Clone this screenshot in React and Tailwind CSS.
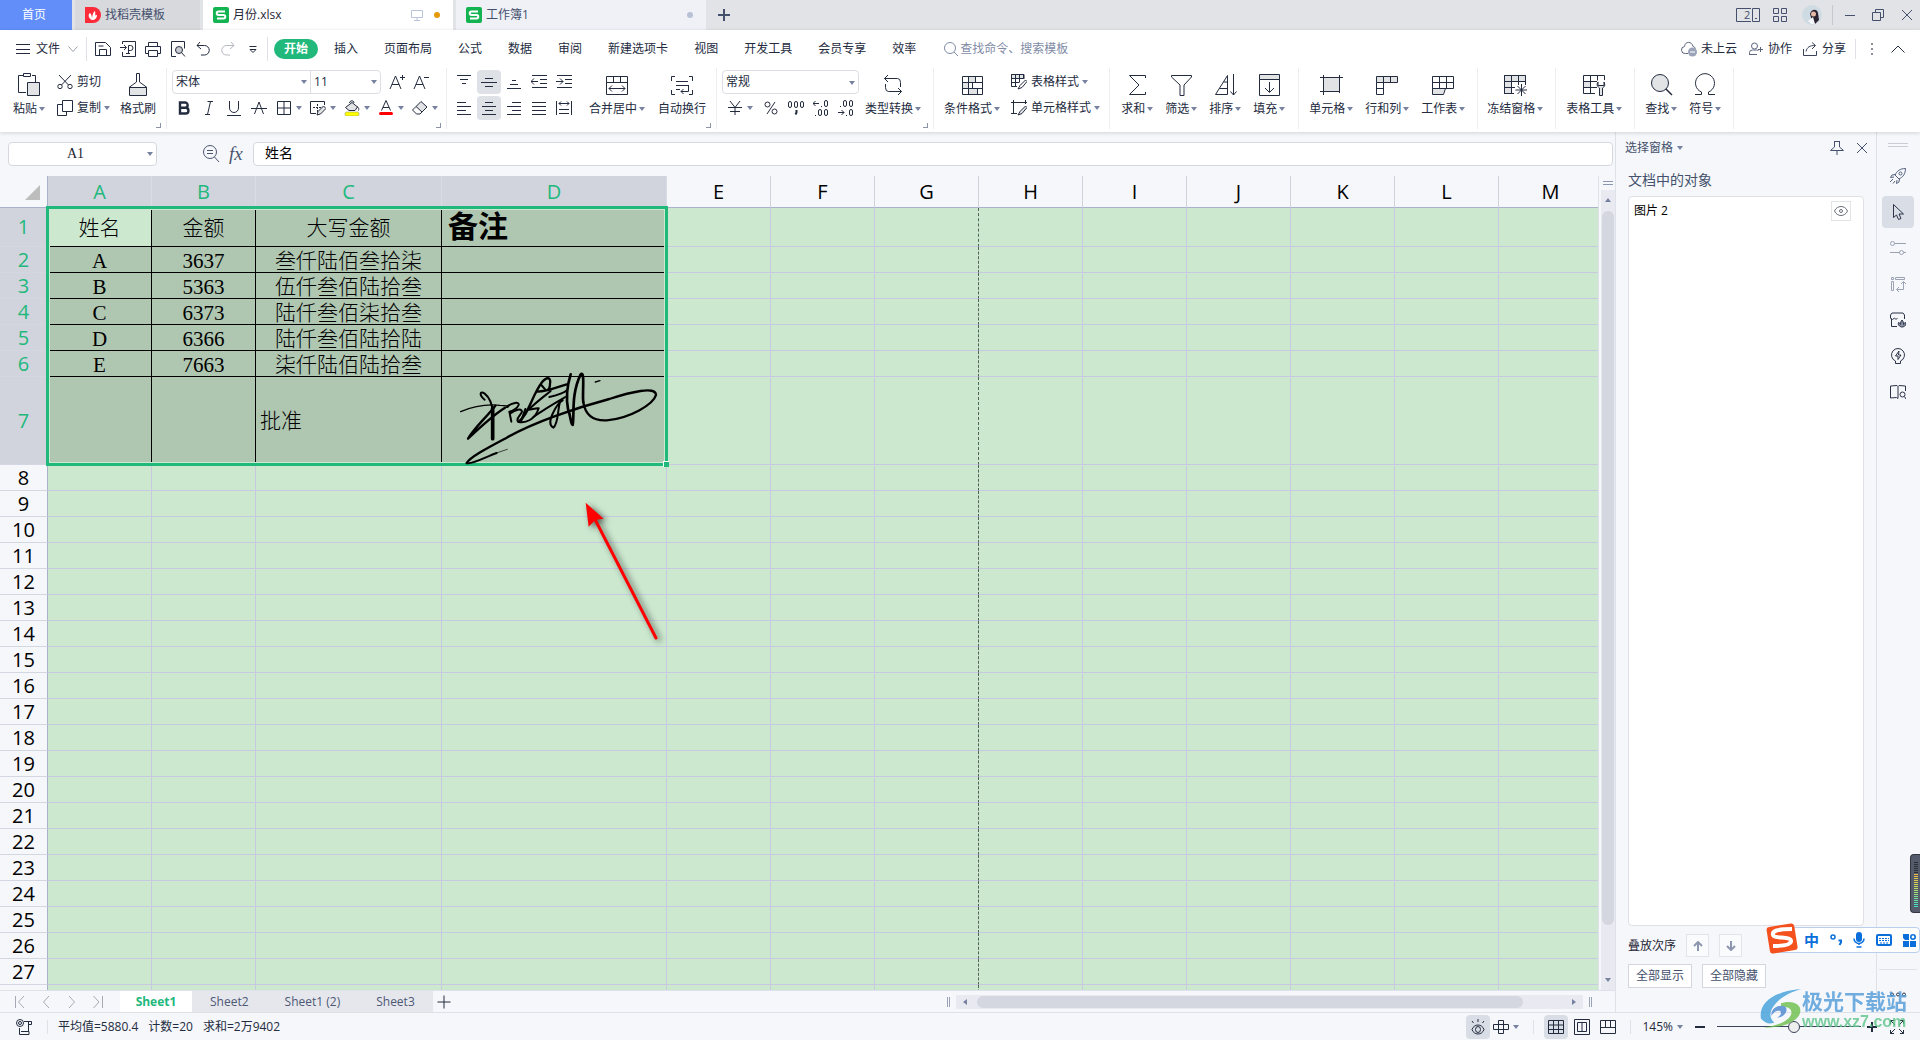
import React from 'react';

const Svg = ({ w = 16, h = 16, className = '', children }) => (
  <svg
    width={w}
    height={h}
    viewBox={`0 0 ${w} ${h}`}
    fill="none"
    stroke="currentColor"
    className={`shrink-0 ${className}`}
    aria-hidden="true"
  >
    {children}
  </svg>
);

const Caret = ({ className = '' }) => (
  <svg width="6" height="4" viewBox="0 0 6 4" className={`shrink-0 fill-[#76829f] ${className}`} aria-hidden="true">
    <path d="M0 0h6L3 4z" />
  </svg>
);

/* ---------- icons ---------- */

const GREY = '#e2e3e5';

const SheetLogo = () => (
  <Svg className="text-white">
    <rect width="16" height="16" rx="2" fill="#14b351" stroke="none" />
    <path d="M12 4.500H5.500a1.700 1.700 0 0 0 0 3.500h5a1.700 1.700 0 0 1 0 3.500H4" strokeWidth="2" />
  </Svg>
);

const DockerLogo = () => (
  <Svg>
    <path d="M0 0h8a8 8 0 0 1 0 16H0z" fill="#fb2b3a" stroke="none" />
    <path d="M7 13C3 11 3 7 5 6c2 2 2 4 2 7zM7 13c0-4 1-8 3-9 1 4 0 7-3 9zM7 13c1-3 3-5 5-5 0 3-2 5-5 5z" fill="#fff" stroke="none" />
  </Svg>
);

const icons = {
  save: (
    <Svg>
      <path d="M.500 1.500h10l5 5v8H.500zM4.500 14.500V8.500h7v6M3.500 5h5" />
    </Svg>
  ),
  pdf: (
    <Svg>
      <path d="M2.500 3V.500h13v15h-13V11M0 6.500h6M4 4l2.500 2.500L4 9M8.500 12V4.500h2a2 2 0 0 1 0 5h-2M6 12.500h4" />
    </Svg>
  ),
  print: (
    <Svg>
      <path d="M3.500 5V1.500h9V5M3 12.500H.500v-7h15v7H13M3.500 9.500h9v6h-9z" />
    </Svg>
  ),
  preview: (
    <Svg>
      <path d="M6 15.500H1.500V.500h13v7" />
      <circle cx="9" cy="9" r="3.500" fill="#c9ccd3" />
      <path d="m11.500 11.500 3.500 4" />
    </Svg>
  ),
  undo: (
    <Svg>
      <path d="M5 1 2 4.500 6 8M2 4.500h7.500a4.500 4.500 0 0 1 0 9.500H6" />
    </Svg>
  ),
  redo: (
    <Svg className="text-[#b4b8c0]">
      <path d="m11 1 3 3.500L10 8M14 4.500H6.500a4.500 4.500 0 0 0 0 9.500H10" />
    </Svg>
  ),
  more: (
    <Svg>
      <path d="M4.500 5.500h7M5 8.500l3 3 3-3z" />
    </Svg>
  ),
  paste: (
    <Svg w={24} h={24}>
      <path d="M9 19.500H1.500v-17H6M15 2.500h3.500V9M6.500.500h7v3h-7z" />
      <path d="M10.500 9.500h12v13h-12z" fill={GREY} />
    </Svg>
  ),
  cut: (
    <Svg>
      <path d="M2 1l9.500 10M14 1 4.500 11" />
      <circle cx="3" cy="12.500" r="2.200" />
      <circle cx="13" cy="12.500" r="2.200" />
    </Svg>
  ),
  copy: (
    <Svg>
      <path d="M5 4.500H.500v11h9V12M5.500.500h10v11h-10z" />
    </Svg>
  ),
  brush: (
    <Svg w={24} h={24}>
      <path d="M10.500.500h3V9l7.500 5.500H3L10.500 9z" />
      <path d="M3.500 14.500h17v8h-17z" fill={GREY} />
    </Svg>
  ),
  bold: (
    <Svg>
      <path d="M4 2.500h5a2.600 2.600 0 0 1 0 5.300H4zM4 7.800h5.600a2.800 2.800 0 0 1 0 5.700H4z" strokeWidth="2.400" />
    </Svg>
  ),
  italic: (
    <Svg>
      <path d="M6.500 1.500H12M4 14.500h5M9.500 1.500l-3 13" />
    </Svg>
  ),
  underline: (
    <Svg>
      <path d="M3.500 1v7a4.500 4.500 0 0 0 9 0V1M1 15.500h14" />
    </Svg>
  ),
  strike: (
    <Svg>
      <path d="M3.500 14 8 2l4.500 12M0 8.500h16" />
    </Svg>
  ),
  border: (
    <Svg>
      <path d="M1.500 1.500h13v13h-13zM8 1.500v13M1.500 8h13" />
    </Svg>
  ),
  drawBorder: (
    <Svg>
      <path d="M6 13.500H.500v-12h14V5" />
      <path d="M7.500 4v8M3 7.500h8" strokeDasharray="2 1" />
      <path d="m7 15 1-3.500L13.500 6 16 8.500 10.500 14z" fill={GREY} />
    </Svg>
  ),
  fill: (
    <Svg>
      <path d="M5.500 3C6 0 10 0 10 3M8 2.500 1.500 7.500 5 10.500h6L13.500 7z" fill={GREY} />
      <path d="M13 6.500c2 1 2 3 1.500 4" />
      <rect x="1" y="12" width="14" height="4" rx="1.500" fill="#ffff00" stroke="#8d8d6a" strokeWidth=".5" />
    </Svg>
  ),
  fontColor: (
    <Svg>
      <path d="M3.500 10.500 8 .500l4.500 10M5 7.500h6" />
      <rect x="1" y="12" width="14" height="3" rx="1.500" fill="#ff0000" stroke="none" />
    </Svg>
  ),
  eraser: (
    <Svg>
      <path d="m4 6.500 5-5 6 5.500-5 5z" fill={GREY} />
      <path d="M4 6.500.500 10 4.500 14h3.500l2-2" />
    </Svg>
  ),
  fontUp: (
    <Svg>
      <path d="m1 15 5.500-13L12 15M3 10.500h7M11 3.500h5M13.500 1v5" />
    </Svg>
  ),
  fontDown: (
    <Svg>
      <path d="m1 15 5.500-13L12 15M3 10.500h7M11 3.500h5" />
    </Svg>
  ),
  top: (
    <Svg>
      <path d="M1 1.500h14M4 5.500h8M6 9.500h4" />
    </Svg>
  ),
  middle: (
    <Svg>
      <path d="M4 4.500h8M0 8.500h16M4 12.500h8" />
    </Svg>
  ),
  bottom: (
    <Svg>
      <path d="M6 6.500h4M4 10.500h8M1 14.500h14" />
    </Svg>
  ),
  outdent: (
    <Svg>
      <path d="M1 1.500h15M9 5.500h7M9 9.500h7M1 13.500h15M0 7.500h7M3 4.500l-3 3 3 3" />
    </Svg>
  ),
  indent: (
    <Svg>
      <path d="M1 1.500h15M9 5.500h7M9 9.500h7M1 13.500h15M0 7.500h7M4 4.500l3 3-3 3" />
    </Svg>
  ),
  left: (
    <Svg>
      <path d="M1 2.500h9M1 6.500h14M1 10.500h9M1 14.500h14" />
    </Svg>
  ),
  center: (
    <Svg>
      <path d="M4 2.500h8M1 6.500h14M4 10.500h8M1 14.500h14" />
    </Svg>
  ),
  right: (
    <Svg>
      <path d="M6 2.500h9M1 6.500h14M6 10.500h9M1 14.500h14" />
    </Svg>
  ),
  justify: (
    <Svg>
      <path d="M1 2.500h14M1 6.500h14M1 10.500h14M1 14.500h14" />
    </Svg>
  ),
  distribute: (
    <Svg>
      <path d="M.500 1v14M15.500 1v14M3 3.500h10M5 1.500l-2 2 2 2M11 1.500l2 2-2 2M3 9.500h10M3 13.500h10" />
    </Svg>
  ),
  merge: (
    <Svg w={24} h={24}>
      <path d="M1.500 3.500h21v18h-21zM1.500 9.500h21M8.500 3.500v6M15.500 3.500v6M4 15.500h16M7 12.500l-3 3 3 3M17 12.500l3 3-3 3" />
    </Svg>
  ),
  wrap: (
    <Svg w={24} h={24}>
      <path d="M1.500 8V3.500H5M19 3.500h3.500V8M1.500 17v4.500H5M19 21.500h3.500V17M6 8.500h12M6 12.500h12M6 16.500h4M18.500 12v6.500H11M13.500 16 11 18.500l2.500 2.500" />
    </Svg>
  ),
  convert: (
    <Svg w={24} h={24}>
      <path d="M7 2 3.500 5.500 7 9M3.500 5.500h13q3 0 3 4V14M17 22l3.500-3.500L17 15M20.500 18.500h-13q-3 0-3-4V11" />
    </Svg>
  ),
  cond: (
    <Svg w={24} h={24}>
      <path d="M8.500 3.500h7v6h-7zM2.500 9.500h6v6h-6zM8.500 15.500h9v6h-9z" fill={GREY} />
      <path d="M2.500 3.500h20v18h-20zM2.500 9.500h20M2.500 15.500h20M15.500 3.500v6M12.500 9.500v6M8.500 15.500v6M17.500 15.500v6" />
    </Svg>
  ),
  tableStyle: (
    <Svg>
      <path d="M.500.500h12v4H.500z" fill={GREY} />
      <path d="M13 5V.500H.500v12H6M.500 4.500h12M.500 8.500H8M4.500.500v12M8.500.500v8" />
      <path d="m7 15 2-3.500 5.500-5.500 1.500 1.500-5 6z" fill="#fff" />
    </Svg>
  ),
  cellStyle: (
    <Svg>
      <path d="M0 2.500h16M2.500 0v13M0 13.500h6M14.500 0v4" />
      <path d="m7 15 2-3.500 5.500-5.500 1.500 1.500-5 6z" fill={GREY} />
    </Svg>
  ),
  sum: (
    <Svg w={24} h={24}>
      <path d="M20.500 5V2.500h-16l9.500 9.500-9.500 9.500h16V19" />
    </Svg>
  ),
  filter: (
    <Svg w={24} h={24}>
      <path d="M2.500 2.500h20V4l-7.500 8v10.500h-4V12L2.500 4z" />
    </Svg>
  ),
  sort: (
    <Svg w={24} h={24}>
      <path d="M14.500 2.500v19h-12zM10.500 9h4M6.500 15.500h8M20.500 1v21M17.500 18.500l3 3.500 3-3.500" />
    </Svg>
  ),
  fillDown: (
    <Svg w={24} h={24}>
      <path d="M2.500 1.500h20v5h-20z" fill={GREY} />
      <path d="M2.500 6.500h20v16h-20zM12.500 9v10M8 15l4.500 4.500L17 15" />
    </Svg>
  ),
  cell: (
    <Svg w={24} h={24}>
      <path d="M4.500 4.500h16v14h-16z" fill={GREY} />
      <path d="M1 4.500h23M4.500 2v20M20.500 2v14M1 18.500h17M20.500 18v2" />
    </Svg>
  ),
  rowCol: (
    <Svg w={24} h={24}>
      <path d="M1.500 3.500h21v6h-21z" fill={GREY} />
      <path d="M1.500 9.500v12h7v-12M1.500 15.500h7M8.500 3.500v6M15.500 3.500v6" />
    </Svg>
  ),
  worksheet: (
    <Svg w={24} h={24}>
      <path d="M1.500 15.500h13l-2 6h-11z" fill={GREY} />
      <path d="M1.500 3.500h21v12h-21zM1.500 9.500h21M8.500 3.500v12M15.500 3.500v12" />
    </Svg>
  ),
  freeze: (
    <Svg w={24} h={24}>
      <path d="M1.500 2.500h21v6h-21zM1.500 8.500h7v12h-7z" fill={GREY} />
      <path d="M22.500 12V2.500h-21v18H11M1.500 14.500H12M8.500 2.500v18M15.500 2.500V12M18.500 11v12M12.500 17h12M14.500 13l8 8M22.500 13l-8 8" />
    </Svg>
  ),
  tableTools: (
    <Svg w={24} h={24}>
      <path d="M1.500 8.500h7v6h-7z" fill={GREY} />
      <path d="M22.500 7V2.500h-21v18H13M1.500 8.500H15M1.500 14.500H15M8.500 2.500v18M15.500 2.500v5" />
      <path d="M16 9c-2 3 0 5 1.500 6v7.500h3V15c2-1 3-3 1.500-6v3.500h-6z" fill={GREY} />
    </Svg>
  ),
  find: (
    <Svg w={24} h={24}>
      <circle cx="11" cy="10" r="8.500" fill={GREY} />
      <path d="m17 16 6 6" strokeWidth="1.500" />
    </Svg>
  ),
  symbol: (
    <Svg w={24} h={24}>
      <path d="M2 21.500h6.500V19A9.500 9.500 0 1 1 15.500 19v2.500H22" />
    </Svg>
  ),
};

/* ---------- title bar ---------- */

const TitleBar = () => (
  <header className="flex h-[30px] shrink-0 items-stretch bg-[#e2e3e7] text-[#44506c]">
    <button className="w-[72px] bg-[#628efa] pr-1 text-white">首页</button>
    <button className="ml-[3px] flex w-[125px] items-center gap-1 bg-[#d8d9dd] pl-[10px]">
      <DockerLogo />
      找稻壳模板
    </button>
    <div className="ml-[3px] flex w-[250px] items-center gap-1 bg-white pl-[10px] text-[#1f2536]">
      <SheetLogo />
      <span className="grow">月份.xlsx</span>
      <Svg w={12} h={12} className="text-[#b9c3da]">
        <path d="M.500 1.500h11v7H.500zM3 11.500h6M6 8.500v3" />
      </Svg>
      <span className="mr-[13px] ml-[7px] size-[6px] rounded-full bg-[#e59a0c]" />
    </div>
    <div className="ml-[3px] flex w-[250px] items-center gap-1 bg-[#eff1f7] pl-[10px]">
      <SheetLogo />
      <span className="grow">工作簿1</span>
      <span className="mr-[13px] size-[6px] rounded-full bg-[#b9c1d6]" />
    </div>
    <button className="flex w-9 items-center justify-center" aria-label="新建">
      <Svg w={12} h={12}>
        <path d="M0 6h12M6 0v12" strokeWidth="2" />
      </Svg>
    </button>
    <div className="grow" />
    <div className="flex items-center">
      <button aria-label="切换窗口" className="relative mr-[13px]">
        <Svg w={24} h={14}>
          <path d="M15 .500H.500v13H15M16.500.500h7v13h-7zM19 10.500h2" />
        </Svg>
        <span className="absolute top-[1px] left-[8px] text-[11px] leading-[12px]">2</span>
      </button>
      <button aria-label="应用" className="mr-[15px]">
        <Svg w={14} h={14}>
          <path d="M.500.500h5v5h-5zM8.500.500h5v5h-5zM.500 8.500h5v5h-5zM8.500 8.500h5v5h-5z" />
        </Svg>
      </button>
      <Svg w={20} h={20}>
        <circle cx="10" cy="10" r="10" fill="#cfdbe2" stroke="none" />
        <path d="M8 9c1-5 7-6 8-1l1 7-4 4-3-3z" fill="#2c2330" stroke="none" />
        <circle cx="11.500" cy="9" r="2.500" fill="#e6b9a4" stroke="none" />
        <path d="m6 16 5-4 2 7H9z" fill="#f3f6f8" stroke="none" />
      </Svg>
      <span className="mr-[12px] ml-[10px] h-5 w-px bg-[#c6c8cf]" />
      <button aria-label="最小化" className="mr-[17px]">
        <Svg w={10} h={12}>
          <path d="M0 6.500h10" />
        </Svg>
      </button>
      <button aria-label="还原" className="mr-[18px]">
        <Svg w={12} h={12}>
          <path d="M.500 3.500h8v8h-8zM3.500 3V.500h8v8H9" />
        </Svg>
      </button>
      <button aria-label="关闭" className="mr-[8px]">
        <Svg w={10} h={12}>
          <path d="m0 1 10 10M10 1 0 11" />
        </Svg>
      </button>
    </div>
  </header>
);

/* ---------- menu row ---------- */

const menus = ['插入', '页面布局', '公式', '数据', '审阅', '新建选项卡', '视图', '开发工具', '会员专享', '效率'];
const quick = [
  ['save', '保存'],
  ['pdf', '输出为PDF'],
  ['print', '打印'],
  ['preview', '打印预览'],
  ['undo', '撤销'],
  ['redo', '恢复'],
  ['more', '自定义'],
];

const MenuRow = () => (
  <nav className="flex h-[38px] items-center pl-4">
    <button className="flex items-center">
      <Svg w={14} h={12} className="mr-[6px]">
        <path d="M0 1.500h14M0 6.500h14M0 10.500h14" />
      </Svg>
      文件
      <Svg w={10} h={6} className="ml-2 text-[#9aa0ac]">
        <path d="m.500.500 4.500 5 4.500-5" />
      </Svg>
    </button>
    <span className="ml-2 h-6 w-px bg-[#dfe1e6]" />
    <div className="ml-2 flex gap-[9px]">
      {quick.map(([id, label]) => (
        <button key={id} aria-label={label}>
          {icons[id]}
        </button>
      ))}
    </div>
    <span className="ml-[6px] h-6 w-px bg-[#dfe1e6]" />
    <button className="ml-[6px] h-5 rounded-full bg-[#21b87c] px-[10px] font-bold text-white">开始</button>
    <div className="ml-4 flex gap-[26px]">
      {menus.map((m) => (
        <button key={m}>{m}</button>
      ))}
    </div>
    <label className="ml-7 flex items-center gap-[2px] text-[#7f8ba6]">
      <Svg w={14} h={14}>
        <circle cx="6" cy="6" r="5.500" />
        <path d="m10 10 4 4" />
      </Svg>
      <input
        className="w-40 bg-transparent outline-none placeholder:text-[#7f8ba6]"
        placeholder="查找命令、搜索模板"
        aria-label="查找命令"
      />
    </label>
    <div className="grow" />
    <div className="flex items-center">
      <button className="flex items-center gap-1">
        <Svg className="text-[#5b657c]">
          <path d="M7 12.500H4.500a3.500 3.500 0 0 1-1-7C4 0 11 0 12 5.500c1 0 2 1 2.500 2" />
          <circle cx="11.500" cy="11" r="4.500" fill="#9ba3b8" stroke="none" />
          <path d="M9 11h5" stroke="#fff" />
        </Svg>
        未上云
      </button>
      <button className="ml-3 flex items-center gap-[5px]">
        <Svg w={14} className="text-[#5b657c]">
          <circle cx="5.500" cy="5" r="3" />
          <path d="M.500 14v-2.500q0-2.500 3-2.500h4q1.500 0 2 1M.500 13.500H8M9 8.500h5M11.500 6v5" />
        </Svg>
        协作
      </button>
      <button className="ml-[11px] flex items-center gap-[5px]">
        <Svg w={14} className="text-[#3a435a]">
          <path d="M.500 8v6.500h13V10M3 10.500C4 6 7 4.500 12 4.500M9 1.500l3.500 3L9 8" />
        </Svg>
        分享
      </button>
      <span className="ml-[9px] h-5 w-px bg-[#dfe1e6]" />
      <button aria-label="更多" className="ml-[14px]">
        <Svg w={4} h={14} className="text-[#8b8f98]">
          <path d="M2 1v2M2 6v2M2 11v2" strokeWidth="2" />
        </Svg>
      </button>
      <button aria-label="折叠功能区" className="mr-[15px] ml-[17px]">
        <Svg w={14} h={8}>
          <path d="M.500 7.500 7 1l6.500 6.500" />
        </Svg>
      </button>
    </div>
  </nav>
);

/* ---------- ribbon ---------- */

const Big = ({ icon, label, caret = true }) => (
  <button className="flex flex-col items-center pt-[5px]">
    {icons[icon]}
    <span className="mt-1 flex items-center gap-[2px] leading-4">
      {label}
      {caret && <Caret />}
    </span>
  </button>
);

const Tool = ({ icon, label, caret, active }) => (
  <button
    aria-label={label}
    className={`flex h-6 items-center justify-center gap-1 ${caret ? 'w-[26px]' : 'w-6'} ${
      active ? 'rounded-sm bg-[#dee2e7]' : ''
    }`}
  >
    {icons[icon]}
    {caret && <Caret />}
  </button>
);

const Row = ({ icon, label, caret = true }) => (
  <button className="flex h-6 items-center">
    {icons[icon]}
    <span className="mr-[3px] ml-1">{label}</span>
    {caret && <Caret />}
  </button>
);

const Group = ({ children, corner, className = 'gap-3 px-[10px]' }) => (
  <div className={`relative flex h-[61px] shrink-0 items-start border-r border-[#eceef1] ${className}`}>
    {children}
    {corner && <span className="absolute right-[5px] bottom-[1px] size-[5px] border-r border-b border-[#8c93a5]" />}
  </div>
);

const Select = ({ label, value, className }) => (
  <div className={`relative h-6 ${className}`}>
    <select aria-label={label} className="h-full w-full appearance-none bg-transparent px-[3px] outline-none">
      <option>{value}</option>
    </select>
    <Caret className="pointer-events-none absolute top-[10px] right-[3px]" />
  </div>
);

const Ribbon = () => (
  <div className="flex h-16 pl-[3px]">
    <Group corner className="pr-[10px] pl-[10px]">
      <Big icon="paste" label="粘贴" />
      <div className="mr-[10px] ml-3 flex flex-col gap-[2px] pt-[2px]">
        <Row icon="cut" label="剪切" caret={false} />
        <Row icon="copy" label="复制" />
      </div>
      <Big icon="brush" label="格式刷" caret={false} />
    </Group>

    <Group corner className="pr-2 pl-[5px]">
      <div className="flex flex-col gap-[2px] pt-[2px]">
        <div className="flex items-center">
          <div className="flex rounded-sm border border-[#dcdee3]">
            <Select label="字体" value="宋体" className="-my-px w-[137px]" />
            <Select label="字号" value="11" className="-my-px w-[70px] border-l border-[#dcdee3]" />
          </div>
          <div className="ml-1 flex">
            <Tool icon="fontUp" label="增大字号" />
            <Tool icon="fontDown" label="减小字号" />
          </div>
        </div>
        <div className="flex items-center">
          <div className="flex gap-[1px]">
            <Tool icon="bold" label="加粗" />
            <Tool icon="italic" label="倾斜" />
            <Tool icon="underline" label="下划线" />
            <Tool icon="strike" label="删除线" />
          </div>
          <div className="ml-[5px] flex gap-2">
            <Tool icon="border" label="边框" caret />
            <Tool icon="drawBorder" label="绘制边框" caret />
            <Tool icon="fill" label="填充颜色" caret />
            <Tool icon="fontColor" label="字体颜色" caret />
            <Tool icon="eraser" label="清除" caret />
          </div>
        </div>
      </div>
    </Group>

    <Group corner className="gap-[13px] pr-[10px] pl-[5px]">
      <div className="grid grid-cols-5 gap-x-px gap-y-[2px] pt-[2px]">
        <Tool icon="top" label="顶端对齐" />
        <Tool icon="middle" label="垂直居中" active />
        <Tool icon="bottom" label="底端对齐" />
        <Tool icon="outdent" label="减少缩进" />
        <Tool icon="indent" label="增加缩进" />
        <Tool icon="left" label="左对齐" />
        <Tool icon="center" label="水平居中" active />
        <Tool icon="right" label="右对齐" />
        <Tool icon="justify" label="两端对齐" />
        <Tool icon="distribute" label="分散对齐" />
      </div>
      <Big icon="merge" label="合并居中" />
      <Big icon="wrap" label="自动换行" caret={false} />
    </Group>

    <Group corner className="gap-[6px] pr-3 pl-[5px]">
      <div className="flex flex-col gap-[2px] pt-[2px]">
        <Select label="数字格式" value="常规" className="w-[137px] rounded-sm border border-[#dcdee3]" />
        <div className="flex gap-px">
          <button aria-label="货币" className="flex h-6 w-9 items-center gap-1 pl-[5px]">
            <Svg>
              <path d="m3 1 5 6.500L13 1M1 7.500h14M3 11.500h10M8 7.500V15" />
            </Svg>
            <Caret />
          </button>
          <button aria-label="百分比" className="flex h-6 w-6 items-center justify-center">
            <Svg>
              <circle cx="4.500" cy="4.500" r="2.500" />
              <circle cx="11.500" cy="11.500" r="2.500" />
              <path d="M12 2 4 14" />
            </Svg>
          </button>
          <button aria-label="千位分隔" className="flex h-6 w-6 items-center justify-center">
            <Svg>
              <rect x=".5" y="1.500" width="3" height="6" rx="1.500" />
              <rect x="6.500" y="1.500" width="3" height="6" rx="1.500" />
              <rect x="12.500" y="1.500" width="3" height="6" rx="1.500" />
              <path d="M8.500 10v2.500l-1 2" strokeWidth="2" />
            </Svg>
          </button>
          <button aria-label="增加小数位" className="flex h-6 w-6 items-center justify-center">
            <Svg>
              <path d="M0 3.500h6M2.500 1 0 3.500 2.500 6M8.500 6v1M2.500 15v1" />
              <rect x="11.500" y=".5" width="3" height="6" rx="1.500" />
              <rect x="5.500" y="9.500" width="3" height="6" rx="1.500" />
              <rect x="11.500" y="9.500" width="3" height="6" rx="1.500" />
            </Svg>
          </button>
          <button aria-label="减少小数位" className="flex h-6 w-6 items-center justify-center">
            <Svg>
              <path d="M0 12.500h6M3.500 10 6 12.500 3.500 15M8.500 15v1M2.500 6v1" />
              <rect x="5.500" y=".5" width="3" height="6" rx="1.500" />
              <rect x="11.500" y=".5" width="3" height="6" rx="1.500" />
              <rect x="11.500" y="9.500" width="3" height="6" rx="1.500" />
            </Svg>
          </button>
        </div>
      </div>
      <Big icon="convert" label="类型转换" />
    </Group>

    <Group className="gap-[11px] pr-[9px] pl-[10px]">
      <Big icon="cond" label="条件格式" />
      <div className="flex flex-col gap-[2px] pt-[2px]">
        <Row icon="tableStyle" label="表格样式" />
        <Row icon="cellStyle" label="单元格样式" />
      </div>
    </Group>

    <Group className="gap-3 pr-[13px] pl-[11px]">
      <Big icon="sum" label="求和" />
      <Big icon="filter" label="筛选" />
      <Big icon="sort" label="排序" />
      <Big icon="fillDown" label="填充" />
    </Group>
    <Group className="gap-3 pr-3 pl-[10px]">
      <Big icon="cell" label="单元格" />
      <Big icon="rowCol" label="行和列" />
      <Big icon="worksheet" label="工作表" />
    </Group>
    <Group className="pr-3 pl-[9px]">
      <Big icon="freeze" label="冻结窗格" />
    </Group>
    <Group className="pr-3 pl-[10px]">
      <Big icon="tableTools" label="表格工具" />
    </Group>
    <Group className="gap-3 pr-3 pl-[10px]">
      <Big icon="find" label="查找" />
      <Big icon="symbol" label="符号" />
    </Group>
  </div>
);

/* ---------- formula bar ---------- */

const FormulaBar = () => (
  <div className="flex h-11 shrink-0 items-center pt-[4px] pr-[2px] pb-[4px] pl-2">
    <div className="relative h-6 w-[149px] rounded-sm border border-[#d5d8de] bg-white">
      <input
        aria-label="名称框"
        defaultValue="A1"
        className="h-full w-[133px] text-center font-['Liberation_Serif',serif] text-[14px] text-[#1c2333] outline-none"
      />
      <Caret className="absolute top-[9px] right-[3px]" />
    </div>
    <Svg w={18} h={20} className="ml-[45px] text-[#4a556e]">
      <circle cx="8" cy="8" r="6.500" />
      <path d="m12.500 13 4.500 5M5 6.500h6M5 9.500h6" />
    </Svg>
    <span className="ml-[9px] w-[24px] font-['Liberation_Serif',serif] text-[19px] leading-6 text-[#4a556e] italic">fx</span>
    <input
      aria-label="编辑栏"
      defaultValue="姓名"
      className="h-6 min-w-0 grow rounded-sm border border-[#d5d8de] bg-white px-[11px] pb-1 text-[14px] text-black outline-none"
    />
  </div>
);

/* ---------- sheet ---------- */

const columns = ['A', 'B', 'C', 'D', 'E', 'F', 'G', 'H', 'I', 'J', 'K', 'L', 'M'];
const data = [
  ['姓名', '金额', '大写金额', '备注'],
  ['A', '3637', '叁仟陆佰叁拾柒', ''],
  ['B', '5363', '伍仟叁佰陆拾叁', ''],
  ['C', '6373', '陆仟叁佰柒拾叁', ''],
  ['D', '6366', '陆仟叁佰陆拾陆', ''],
  ['E', '7663', '柒仟陆佰陆拾叁', ''],
  ['', '', '批准', ''],
];

const colWidth = (c) => (c === 'C' ? 'w-[186px]' : c === 'D' ? 'w-[225px]' : 'w-[104px]');
const rowHeight = (r) => (r === 0 ? 'h-[39px]' : r === 6 ? 'h-[88px]' : 'h-[26px]');

const cellClass = (r, c) => {
  const selected = r < 7 && c < 4;
  const line = selected
    ? 'border-r border-b border-black'
    : c === 6
      ? 'border-r border-b border-r-[#54605a] border-b-[#c6c9e0] [border-right-style:dashed]'
      : 'border-r border-b border-[#c6c9e0]';
  const fill = selected && !(r === 0 && c === 0) ? 'bg-[#afc6b1]' : '';
  const text =
    r === 0 && c === 3
      ? 'pl-[6px] text-left text-[30px] leading-8 font-bold'
      : r === 6 && c === 2
        ? 'pl-1 text-left'
        : 'pt-[2px] text-center';
  return `${line} ${fill} ${text}`;
};

const Grid = () => (
  <div className="relative min-h-0 min-w-0 grow overflow-hidden bg-[#cce8cf]">
    <table className="w-[1603px] table-fixed border-separate border-spacing-0">
      <thead>
        <tr className="h-8 text-[20px] leading-6">
          <th className="relative w-12 border-r border-b border-[#aab1cb] bg-[#f5f7fa]">
            <svg width="15" height="15" className="absolute top-[9px] right-[7px] fill-[#bdbdbd]" aria-hidden="true">
              <path d="M15 0v15H0z" />
            </svg>
          </th>
          {columns.map((c, i) => (
            <th
              key={c}
              scope="col"
              className={`border-r border-b border-b-[#aab1cb] font-normal ${colWidth(c)} ${
                i < 4 ? 'border-r-[#dadce5] bg-[#d1d4dd] text-[#21b87c]' : 'border-r-[#cfd3de] bg-[#f5f7fa] text-black'
              }`}
            >
              {c}
            </th>
          ))}
        </tr>
      </thead>
      <tbody className="font-['Liberation_Serif','Noto_Sans_CJK_SC',serif] text-[21px] leading-[22px] font-light text-black">
        {Array.from({ length: 28 }, (_, r) => (
          <tr key={r} className={rowHeight(r)}>
            <th
              scope="row"
              className={`border-r border-b border-r-[#aab1cb] border-b-[#d3d7e1] p-0 font-['Open_Sans','Noto_Sans_CJK_SC',sans-serif] text-[20px] font-normal ${
                r < 7 ? 'bg-[#d1d4dd] text-[#21b87c]' : 'bg-[#f5f7fa]'
              }`}
            >
              {r < 27 && r + 1}
            </th>
            {columns.map((c, i) => (
              <td key={c} className={`p-0 whitespace-nowrap ${cellClass(r, i)}`}>
                {data[r]?.[i]}
              </td>
            ))}
          </tr>
        ))}
      </tbody>
    </table>

    {/* selection frame and its drag handle */}
    <div className="pointer-events-none absolute top-[30px] left-[46px] h-[260px] w-[622px] border-[3px] border-[#21b87c] shadow-[inset_0_0_0_1px_#cce8cf]">
      <span className="absolute -right-1 -bottom-1 size-[6px] border-t border-l border-white bg-[#21b87c]" />
    </div>

    {/* signature image */}
    <svg
      width="220"
      height="110"
      viewBox="0 0 660 330"
      className="absolute top-[189px] left-[450px]"
      fill="none"
      stroke="#000"
      strokeLinecap="round"
      strokeLinejoin="round"
      role="img"
      aria-label="图片 2"
    >
      <path d="M32 140C60 128 100 116 150 121C185 122 178 126 165 128" strokeWidth="4" />
      <path d="M165 128C130 150 95 182 54 221C72 190 108 158 136 122" strokeWidth="7" />
      <path d="M104 104C86 90 90 76 104 86C120 98 128 122 130 150" strokeWidth="6" />
      <path d="M128 130L128 221" strokeWidth="11" />
      <path d="M172 124C186 114 208 108 206 120C202 130 188 138 178 140L184 170M180 146C196 134 214 128 216 140C214 150 196 160 204 170C226 176 256 164 266 130M226 132L214 166M262 130L236 134" strokeWidth="6" />
      <path d="M206 170C236 150 246 90 276 52C290 34 304 36 300 56C300 66 296 74 290 76M262 80C296 78 326 64 350 58" strokeWidth="7" />
      <path d="M274 60L286 74M302 78C280 96 258 112 238 132M298 96C322 90 344 82 350 76M346 96C318 112 286 130 250 156M338 106C322 114 284 176 310 188C326 178 322 130 332 104" strokeWidth="6" />
      <path d="M362 28C352 60 348 100 354 132C364 160 362 180 368 180C374 150 362 90 392 28C406 14 396 90 400 112" strokeWidth="8" />
      <path d="M400 112C406 150 430 168 470 166C540 160 610 118 618 90C618 62 540 82 478 102C380 128 250 172 170 218C110 250 60 276 50 294" strokeWidth="7" />
      <path d="M50 294C66 300 106 276 140 264" strokeWidth="6" />
      <path d="M130 267L172 253" strokeWidth="2" />
      <path d="M436 51L450 47" strokeWidth="4" />
    </svg>

    {/* red pointer */}
    <svg
      width="110"
      height="160"
      viewBox="0 0 330 480"
      className="absolute top-[314px] left-[570px] drop-shadow-[3px_2px_3px_rgba(0,0,0,0.6)]"
      aria-hidden="true"
    >
      <path d="M76 90L258 444" stroke="#fe0000" strokeWidth="9" strokeLinecap="round" />
      <path d="M47 38L101 86L76 90L56 110z" fill="#fe0000" />
    </svg>
  </div>
);

const VScroll = () => (
  <div className="flex w-[17px] shrink-0 flex-col items-center border-l border-[#dfe1e9] pl-[2px]">
    <Svg w={10} h={14} className="text-[#8c96ae]">
      <path d="M0 5.500h10M0 8.500h10" />
    </Svg>
    <div className="flex w-full grow flex-col items-center bg-[#e9eaf1]">
      <Caret className="mt-2 rotate-180" />
      <div className="mt-[9px] w-3 grow rounded-full bg-[#d4d7e0]" />
      <Caret className="mt-[53px] mb-2" />
    </div>
  </div>
);

const navPaths = ['M.500 0v12M9 0 3.500 6 9 12', 'M8 0 2.500 6 8 12', 'M2 0l5.500 6L2 12', 'M.500 0 6 6 .500 12M9.500 0v12'];
const navLabels = ['第一个', '上一个', '下一个', '最后一个'];

const SheetTabs = () => (
  <div className="flex h-[22px] shrink-0 items-center border-t border-[#dfe1e9]">
    <div className="flex w-[120px] shrink-0 gap-4 pl-[15px]">
      {navPaths.map((d, i) => (
        <button key={d} aria-label={navLabels[i]}>
          <Svg w={10} h={12} className="text-[#a5a9b3]">
            <path d={d} />
          </Svg>
        </button>
      ))}
    </div>
    <div className="flex h-full bg-[#e6e7ed] text-[12px] text-[#4d5875]">
      <button className="w-[72px] bg-white font-bold text-[#21b87c]">Sheet1</button>
      <button className="px-[18px]">Sheet2</button>
      <button className="px-[18px]">Sheet1 (2)</button>
      <button className="px-[18px]">Sheet3</button>
    </div>
    <button aria-label="新建工作表" className="ml-1">
      <Svg w={14} h={14}>
        <path d="M.500 7h13M7 .500v13" />
      </Svg>
    </button>
    <div className="grow" />
    <div className="flex w-[668px] items-center">
      <span className="mr-[6px] h-[10px] w-[3px] border-x border-[#9aa2b6]" />
      <div className="flex h-[14px] grow items-center bg-[#e9eaf1]">
        <Caret className="ml-[6px] rotate-90" />
        <div className="ml-[9px] h-3 grow rounded-full bg-[#d4d7e0]" />
        <Caret className="mr-[6px] ml-[48px] -rotate-90" />
      </div>
      <span className="mr-[23px] ml-[6px] h-[10px] w-[3px] border-x border-[#9aa2b6]" />
    </div>
  </div>
);

/* ---------- selection pane ---------- */

const SelectionPane = () => (
  <aside className="flex w-[261px] shrink-0 flex-col border-l border-[#dfe1e9] pr-3 pl-3 text-[#44506c]">
    <div className="-ml-[3px] flex h-8 items-center">
      <span className="mr-1">选择窗格</span>
      <Caret />
      <div className="grow" />
      <button aria-label="固定" className="mr-3">
        <Svg w={14} h={14}>
          <path d="M4 .500h6M4.500.500v5.500L.500 9.500h13l-4-3.500V.500M7 9.500V14" />
        </Svg>
      </button>
      <button aria-label="关闭窗格" className="-mr-1">
        <Svg w={12} h={12}>
          <path d="m1 1 10 10M11 1 1 11" />
        </Svg>
      </button>
    </div>
    <h2 className="flex h-8 items-center text-[14px]">文档中的对象</h2>
    <ul className="grow rounded-sm border border-[#dfe1e6] bg-white">
      <li className="flex items-center pt-1 pr-3 pl-[5px] text-black">
        <span className="grow">图片 2</span>
        <button aria-label="显示或隐藏" className="flex size-5 items-center justify-center border border-[#e2e4e8]">
          <Svg w={14} h={12} className="text-[#6b707c]">
            <path d="M.500 6C3 0 11 0 13.500 6 11 12 3 12 .500 6z" />
            <circle cx="7" cy="6" r="1.500" />
          </Svg>
        </button>
      </li>
    </ul>
    <div className="mt-2 flex items-center gap-[10px] text-[#1f2536]">
      叠放次序
      <button aria-label="上移" className="flex size-[23px] items-center justify-center border border-[#e2e4ea] bg-[#fafbfc]">
        <Svg w={10} h={10} className="text-[#8c96ae]">
          <path d="M5 10V2M1 5l4-4 4 4" strokeWidth="2" />
        </Svg>
      </button>
      <button aria-label="下移" className="flex size-[23px] items-center justify-center border border-[#e2e4ea] bg-[#fafbfc]">
        <Svg w={10} h={10} className="text-[#8c96ae]">
          <path d="M5 0v8M1 5l4 4 4-4" strokeWidth="2" />
        </Svg>
      </button>
    </div>
    <div className="mt-[7px] mb-6 flex gap-[10px]">
      <button className="h-6 w-16 border border-[#d3d6dd] bg-white">全部显示</button>
      <button className="h-6 w-16 border border-[#d3d6dd] bg-white">全部隐藏</button>
    </div>
  </aside>
);

const SideTools = () => (
  <aside className="flex w-11 shrink-0 flex-col items-center border-l border-[#dfe1e9] pr-[2px] text-[#2b3347]">
    <span className="mt-[11px] mb-[11px] h-1 w-5 border-y border-[#c9ccd4]" />
    <button aria-label="快捷工具" className="flex h-9 items-center">
      <Svg className="text-[#55617d]">
        <path d="M15.500.500C10 .500 7 3 5 7l4 4c4-2 6.500-5 6.500-10.500zM5.500 6.500 2 7 .500 9.500 4 9M9.500 10.500 9 14l-2.500 1.500L7 12M3 11l-3 3M5 13l-2 2.500" />
        <circle cx="10.500" cy="5.500" r="1.500" />
      </Svg>
    </button>
    <button aria-label="选择" className="my-[2px] flex h-8 w-8 items-center justify-center rounded-sm bg-[#d9dee6]">
      <Svg>
        <path d="M3.500.500v13l3-2.500 2 4.500 2.500-1-2-4.500h4.500z" />
      </Svg>
    </button>
    <button aria-label="属性" className="flex h-9 items-center">
      <Svg className="text-[#9aa2b4]">
        <circle cx="2.500" cy="3.500" r="2" />
        <circle cx="11.500" cy="12.500" r="2" />
        <path d="M4.500 3.500H16M0 12.500h9.500M13.500 12.500H16" />
      </Svg>
    </button>
    <button aria-label="转置" className="flex h-9 items-center">
      <Svg className="text-[#9aa2b4]">
        <path d="M1.500 1.500h2v2h-2zM5.500 1.500h9v2h-9zM1.500 5.500h2v9h-2zM13.500 6v7.500H7M11 8l2.500-2.500L16 8M9 11l-2.500 2.500L9 16" />
      </Svg>
    </button>
    <button aria-label="稻壳" className="flex h-9 items-center">
      <Svg>
        <path d="M1.500 7v7.500H7M.500 6.500V3l1.500-2h11l1.500 2v4M.500 6q2 3 4 0 1.500 3 3 0" />
        <path d="M11.500 15C8 14 8 11.500 8.500 10.500c1 .500 2 1 2 2 0-2 .500-3.500 1.500-4.500 1 1 1.500 2.500 1.500 4.500 0-1 1-1.500 2-2 .500 2 0 4.500-4 4.500z" fill="#8b93a5" />
      </Svg>
    </button>
    <button aria-label="灵感" className="flex h-9 items-center">
      <Svg>
        <path d="M5.500 15.500v-2.500a6.500 6.500 0 1 1 5 0v2.500zM9 3 5.500 8h2.500v3.500L11 7H8.500z" />
      </Svg>
    </button>
    <button aria-label="手册" className="flex h-9 items-center">
      <Svg>
        <path d="M8 14.500 6.500 13.500.500 14V2L7 1.500l1 1 1-1 6.500.500v5M8 2.500v12" />
        <circle cx="12.500" cy="10.500" r="2.500" />
        <path d="m14.500 12.500 1.500 2.500" />
      </Svg>
    </button>
    <div className="grow" />
    <span className="mb-[22px] h-px w-[38px] bg-[#dfe1e9]" />
    <button aria-label="更多工具" className="mb-[15px]">
      <Svg w={16} h={5}>
        <circle cx="2" cy="2.500" r="1.500" />
        <circle cx="8" cy="2.500" r="1.500" />
        <circle cx="14" cy="2.500" r="1.500" />
      </Svg>
    </button>
  </aside>
);

/* ---------- status bar ---------- */

const StatusBar = () => (
  <footer className="flex h-7 shrink-0 items-center border-t border-[#dfe1e9]">
    <Svg className="ml-4">
      <circle cx="4" cy="4" r="3.500" />
      <circle cx="4" cy="4" r="1.500" />
      <path d="M8 2.500h7.500v3H13M12.500 3v9.500M3.500 9v6.500h9.500v-3H5" />
    </Svg>
    <span className="mr-[10px] ml-[15px] h-[14px] w-px bg-[#dfe1e9]" />
    <div className="flex gap-[10px]">
      <span>平均值=5880.4</span>
      <span>计数=20</span>
      <span>求和=2万9402</span>
    </div>
    <div className="grow" />
    <button aria-label="护眼模式" className="flex h-6 w-6 items-center justify-center rounded-sm bg-[#d9dee6]">
      <Svg>
        <path d="M2 10.500C4 4.500 12 4.500 14 10.500 12 16.500 4 16.500 2 10.500zM8 0v3M2 2l1.500 2M14 2l-1.500 2" />
        <ellipse cx="8" cy="10.500" rx="2.500" ry="3" />
      </Svg>
    </button>
    <button aria-label="阅读模式" className="mr-[14px] ml-[3px] flex items-center gap-1">
      <Svg>
        <path d="M5.500 1.500h5v13h-5zM.500 5.500h15v5H.500z" />
      </Svg>
      <Caret />
    </button>
    <span className="h-[14px] w-px bg-[#dfe1e9]" />
    <button aria-label="普通视图" className="ml-[10px] flex h-6 w-6 items-center justify-center rounded-sm bg-[#d9dee6]">
      <Svg>
        <path d="M.500 1.500h15v13H.500zM.500 6h15M.500 10.500h15M5.500 1.500v13M10.500 1.500v13" />
      </Svg>
    </button>
    <button aria-label="分页预览" className="ml-[6px]">
      <Svg>
        <path d="M.500.500h15v15H.500zM3.500 3.500h9v9h-9zM8 3.500v9" />
      </Svg>
    </button>
    <button aria-label="页面布局视图" className="ml-[10px]">
      <Svg>
        <path d="M.500 1.500h15v13H.500zM5.500 1.500v7h5v-7M.500 8.500h15" />
      </Svg>
    </button>
    <span className="mr-[11px] ml-[14px] h-[14px] w-px bg-[#dfe1e9]" />
    <button className="flex items-center gap-1">
      145%
      <Caret />
    </button>
    <button aria-label="缩小" className="ml-3">
      <Svg w={10} h={10}>
        <path d="M0 5h10" strokeWidth="2" />
      </Svg>
    </button>
    <input
      type="range"
      aria-label="缩放"
      min="0"
      max="100"
      defaultValue="54"
      className="mx-3 h-px w-[144px] appearance-none bg-[#3a435a] [&::-webkit-slider-thumb]:size-3 [&::-webkit-slider-thumb]:appearance-none [&::-webkit-slider-thumb]:rounded-full [&::-webkit-slider-thumb]:border [&::-webkit-slider-thumb]:border-[#3a435a] [&::-webkit-slider-thumb]:bg-[#eeeeee]"
    />
    <button aria-label="放大" className="mr-[13px] -ml-[6px]">
      <Svg w={10} h={10}>
        <path d="M0 5h10M5 0v10" strokeWidth="2" />
      </Svg>
    </button>
    <button aria-label="全屏" className="mr-4">
      <Svg w={14} h={14}>
        <path d="M.500 4V.500H4M.500.500 5 5M10 .500h3.500V4M13.500.500 9 5M.500 10v3.500H4M.500 13.500 5 9M10 13.500h3.500V10M13.500 13.500 9 9" />
      </Svg>
    </button>
  </footer>
);

/* ---------- floating things ---------- */

const ImeBar = () => (
  <div className="absolute right-0 bottom-[87px] flex h-[26px] w-[150px] items-center gap-[11px] rounded-sm border border-[#b9cfec] bg-white pl-[33px] text-[#0a6fdb]">
    <svg width="34" height="34" viewBox="0 0 34 34" className="absolute -top-[7px] -left-[6px]" aria-hidden="true">
      <rect x="3" y="4" width="28" height="27" rx="3" fill="#f4511e" transform="rotate(-9 17 17)" />
      <path d="M27 8C12 8 7 10 8 14c1 4 18 1 18 6 0 4-8 5-18 5" fill="none" stroke="#fff" strokeWidth="4" />
    </svg>
    <span className="w-[15px] text-[15px] leading-5 font-bold">中</span>
    <Svg w={12} h={14}>
      <circle cx="3" cy="4" r="2" strokeWidth="1.500" />
      <path d="M8.500 7.500H11v2L9.500 12" strokeWidth="2" />
    </Svg>
    <Svg w={12} h={16}>
      <rect x="3" y="0" width="6" height="10" rx="3" fill="currentColor" stroke="none" />
      <path d="M1 6.500a5 5 0 0 0 10 0M6 12v1M3.500 15h5" strokeWidth="1.500" />
    </Svg>
    <Svg w={16} h={12}>
      <rect x="1" y="1" width="14" height="10" rx="1" strokeWidth="2" />
      <path d="M3 4.500h10M3 6.500h10M4 9h8" strokeDasharray="2 1" />
    </Svg>
    <Svg w={13} h={13}>
      <path d="M0 0h6v6H2L0 4zM0 7h6v6H0zM7 7h6v6H7z" fill="currentColor" stroke="none" />
      <circle cx="10" cy="3" r="2.200" strokeWidth="1.600" />
    </Svg>
  </div>
);

const LevelMeter = () => (
  <div className="absolute right-0 bottom-[127px] h-[59px] w-[10px] rounded-l-sm border border-r-0 border-[#33363f] bg-[#555b6b] pt-[6px] pl-[3px]">
    <div className="h-[46px] w-1 bg-[repeating-linear-gradient(#555b6b_0_1px,transparent_1px_2px),linear-gradient(#2c2f36_0_25%,#f2b53a_25%,#c9df5a_55%,#3be0c8)]" />
  </div>
);

const Watermark = () => (
  <div className="pointer-events-none absolute right-[10px] bottom-[8px] flex w-[150px] items-center opacity-80">
    <svg width="42" height="44" viewBox="0 0 44 44" className="shrink-0" aria-hidden="true">
      <path d="M43 0C16 2-2 14 1 31c5 6 10 6 14 4C4 26 16 8 43 0z" fill="#3f9fdc" />
      <path d="M22 15c14-4 22 2 20 10C40 34 22 42 4 40c14-1 28-7 29-15 0-5-5-7-11-6z" fill="#6cc04a" />
      <path d="M12 28c-1-8 9-13 15-9 3 5-3 11-9 11 4-2 5-5 3-7-3-1-7 1-9 5z" fill="#4a86d0" />
    </svg>
    <div className="whitespace-nowrap">
      <div className="text-[21px] leading-6 font-bold text-[#4f9ad8]">极光下载站</div>
      <div className="font-['Liberation_Sans',sans-serif] text-[16px] leading-[18px] font-bold text-[#5fc58a]">www.xz7.com</div>
    </div>
  </div>
);

const App = () => {
  return (
    <div className="relative flex h-screen flex-col overflow-hidden bg-[#f5f7fa] font-['Open_Sans','Noto_Sans_CJK_SC',sans-serif] text-[12px] leading-4 text-[#232b3e]">
      <TitleBar />
      <div className="z-10 shrink-0 bg-white shadow-[0_1px_4px_rgba(0,0,0,0.15)]">
        <MenuRow />
        <Ribbon />
      </div>
      <main className="flex min-h-0 grow">
        <section className="flex min-h-0 min-w-0 grow flex-col">
          <FormulaBar />
          <div className="flex min-h-0 grow">
            <Grid />
            <VScroll />
          </div>
          <SheetTabs />
        </section>
        <SelectionPane />
        <SideTools />
      </main>
      <StatusBar />
      <LevelMeter />
      <Watermark />
      <ImeBar />
    </div>
  );
};

export default App;
